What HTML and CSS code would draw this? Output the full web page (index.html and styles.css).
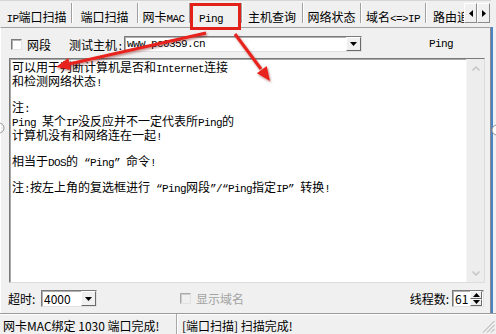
FILE: index.html
```html
<!DOCTYPE html>
<html>
<head>
<meta charset="utf-8">
<title>Ping</title>
<link rel="stylesheet" href="styles.css">
</head>
<body>
<div class="app">
  <div class="tabs">
    <div class="tab t1"><span class="m">IP</span>端口扫描</div>
    <div class="tab t2">端口扫描</div>
    <div class="tab t3">网卡<span class="m">MAC</span></div>
    <div class="tab t4"><span class="m">Ping</span></div>
    <div class="tab t5">主机查询</div>
    <div class="tab t6">网络状态</div>
    <div class="tab t7">域名<span class="m">&lt;=&gt;IP</span></div>
    <div class="tab t8">路由追踪</div>
    <div class="tab-scroll">
      <span class="sbtn"><svg width="4" height="7" viewBox="0 0 4 7"><polygon points="4,0 4,7 0,3.5" fill="#000"/></svg></span>
      <span class="sbtn"><svg width="4" height="7" viewBox="0 0 4 7"><polygon points="0,0 0,7 4,3.5" fill="#000"/></svg></span>
    </div>
  </div>

  <div class="panel">
    <div class="host-row">
      <span class="check"></span><span class="check-label">网段</span>
      <span class="host-label">测试主机<span class="m">:</span></span>
      <div class="combo host-combo">
        <span class="combo-value m">www.pc0359.cn</span>
        <span class="combo-btn"><svg width="7" height="4" viewBox="0 0 7 4"><polygon points="0,0 7,0 3.5,4" fill="#000"/></svg></span>
      </div>
      <span class="mode m">Ping</span>
    </div>

    <div class="memo">
      <div class="memo-text">
        <div>可以用于判断计算机是否和<span class="m">Internet</span>连接</div>
        <div>和检测网络状态<span class="m">!</span></div>
        <div class="blank"></div>
        <div>注<span class="m">:</span></div>
        <div><span class="m">Ping </span>某个<span class="m">IP</span>没反应并不一定代表所<span class="m">Ping</span>的</div>
        <div>计算机没有和网络连在一起<span class="m">!</span></div>
        <div class="blank"></div>
        <div>相当于<span class="m">DOS</span>的<span class="m"> “Ping” </span>命令<span class="m">!</span></div>
        <div class="blank"></div>
        <div>注<span class="m">:</span>按左上角的复选框进行<span class="m"> “Ping</span>网段<span class="m">”/“Ping</span>指定<span class="m">IP” </span>转换<span class="m">!</span></div>
      </div>
      <div class="vscroll">
        <svg width="8" height="5" viewBox="0 0 8 5"><polyline points="0.5,4.5 4,1 7.5,4.5" fill="none" stroke="#c2c2c2" stroke-width="1.4"/></svg>
        <svg width="8" height="5" viewBox="0 0 8 5"><polyline points="0.5,0.5 4,4 7.5,0.5" fill="none" stroke="#c2c2c2" stroke-width="1.4"/></svg>
      </div>
    </div>

    <div class="opt-row">
      <span class="opt-label">超时:</span>
      <div class="combo timeout-combo">
        <span class="combo-value">4000</span>
        <span class="combo-btn"><svg width="7" height="4" viewBox="0 0 7 4"><polygon points="0,0 7,0 3.5,4" fill="#000"/></svg></span>
      </div>
      <span class="check disabled"></span><span class="check-label disabled-text">显示域名</span>
      <span class="threads-label">线程数:</span>
      <div class="spin">
        <span class="spin-value">61</span>
        <span class="spin-btns">
          <span class="spin-btn"><svg width="7" height="4" viewBox="0 0 7 4"><polygon points="0,4 7,4 3.5,0" fill="#000"/></svg></span>
          <span class="spin-btn"><svg width="7" height="4" viewBox="0 0 7 4"><polygon points="0,0 7,0 3.5,4" fill="#000"/></svg></span>
        </span>
      </div>
    </div>
  </div>

  <div class="status">
    <div class="status-pane first">网卡MAC绑定 1030 端口完成!</div>
    <div class="status-pane second">[端口扫描] 扫描完成!</div>
    <svg class="grip" width="13" height="13" viewBox="0 0 13 13">
      <g stroke-width="1">
        <line x1="12.5" y1="1" x2="1" y2="12.5" stroke="#a8a8a8"/>
        <line x1="12.5" y1="5" x2="5" y2="12.5" stroke="#a8a8a8"/>
        <line x1="12.5" y1="9" x2="9" y2="12.5" stroke="#a8a8a8"/>
      </g>
    </svg>
  </div>

  <svg class="annot" width="496" height="334" viewBox="0 0 496 334">
    <defs>
      <filter id="sh" x="-20%" y="-20%" width="140%" height="140%">
        <feDropShadow dx="1" dy="1.5" stdDeviation="1" flood-color="#700000" flood-opacity="0.45"/>
      </filter>
    </defs>
    <circle cx="-1" cy="128" r="5" fill="none" stroke="#9a9a9a"/>
    <circle cx="497" cy="130" r="5" fill="#fff" stroke="#8a8a8a"/>
    <g filter="url(#sh)" fill="#e8231c" stroke="#e8231c">
      <line x1="206" y1="33" x2="69" y2="64" stroke-width="3"/>
      <polygon points="56,67 71,69.8 68.3,58.1" stroke="none"/>
      <line x1="235" y1="34" x2="261" y2="69" stroke-width="3"/>
      <polygon points="270,81 266.7,66.1 256.9,73.2" stroke="none"/>
    </g>
    <rect x="191.5" y="4.5" width="48" height="24" fill="none" stroke="#e3211b" stroke-width="3"/>
  </svg>
</div>
</body>
</html>
```

FILE: styles.css
```css
* { box-sizing: border-box; }
html, body { margin: 0; padding: 0; }
body {
  width: 496px;
  height: 334px;
  overflow: hidden;
  background: #f0f0f0;
  font-family: "Noto Sans CJK SC", sans-serif;
  font-size: 12px;
  color: #000;
}
.app {
  position: relative;
  width: 496px;
  height: 334px;
  display: flex;
  flex-direction: column;
}
.m {
  font-family: "Liberation Mono", "Noto Sans CJK SC", monospace;
  font-size: 11px;
  letter-spacing: -0.6px;
}

/* tabs */
.tabs {
  display: flex;
  height: 27px;
  width: 491px;
  padding-left: 2px;
  border-top: 1px solid #d6d6d6;
  flex: none;
}
.tab {
  flex: none;
  margin-top: 2px;
  height: 20px;
  padding-top: 8px;
  line-height: 12px;
  white-space: nowrap;
  text-align: center;
  border-right: 1px solid #a0a0a0;
  box-shadow: 1px 0 0 #fff;
}
.t1 { width: 70px; }
.t2 { width: 66px; }
.t3 { width: 52px; }
.t4 { width: 52px; text-align: left; padding-left: 9px; }
.t5 { width: 61px; }
.t6 { width: 58px; }
.t7 { width: 65px; }
.t8 { width: 38px; overflow: hidden; text-align: left; padding-left: 7px; border-right: none; box-shadow: none; }
.tab-scroll {
  display: flex;
  margin-top: 2px;
  height: 20px;
  flex: none;
}
.sbtn {
  width: 13px;
  height: 20px;
  display: flex;
  align-items: center;
  justify-content: center;
  background: #f0f0f0;
  border: 1px solid;
  border-color: #fff #8a8a8a #8a8a8a #fff;
}

/* panel */
.panel {
  width: 491px;
  height: 286px;
  border-top: 1px solid #a0a0a0;
  border-left: 1px solid #fff;
  border-right: 1px solid #8a8a8a;
  box-shadow: 2px 0 0 #4a84c4;
  flex: none;
}
.host-row {
  display: flex;
  align-items: center;
  height: 16px;
  margin-top: 8px;
  padding-left: 10px;
}
.check {
  width: 11px;
  height: 11px;
  flex: none;
  background: #fff;
  border: 1px solid;
  border-color: #7a7a7a #e4e4e4 #e4e4e4 #7a7a7a;
  box-shadow: inset 1px 1px 0 #b4b4b4;
}
.check.disabled {
  background: #f0f0f0;
  border-color: #a8a8a8 #e2e2e2 #e2e2e2 #a8a8a8;
  box-shadow: inset 1px 1px 0 #d0d0d0;
}
.check-label { margin-left: 5px; white-space: nowrap; }
.disabled-text { color: #a3a3a3; }
.host-label { margin-left: 18px; width: 54px; white-space: nowrap; }
.combo {
  display: flex;
  align-items: center;
  background: #fff;
  border: 1px solid;
  border-color: #7a7a7a #e0e0e0 #e0e0e0 #7a7a7a;
  box-shadow: inset 1px 1px 0 #b0b0b0;
  flex: none;
}
.host-combo { margin-left: 1px; width: 238px; height: 16px; }
.combo-value { padding-left: 2px; white-space: nowrap; line-height: 12px; }
.combo-btn {
  margin-left: auto;
  width: 15px;
  height: 100%;
  display: flex;
  align-items: center;
  justify-content: center;
  background: #f0f0f0;
  border: 1px solid;
  border-color: #fff #6a6a6a #6a6a6a #fff;
}
.mode { margin-left: 67px; }

/* memo */
.memo {
  display: flex;
  margin: 6px 0 0 8px;
  width: 476px;
  height: 225px;
  background: #fff;
  border: 1px solid;
  border-color: #7a7a7a #dcdcdc #dcdcdc #7a7a7a;
  box-shadow: inset 1px 1px 0 #a8a8a8;
}
.memo-text {
  flex: 1;
  padding: 2px 0 0 2px;
  line-height: 12px;
  white-space: nowrap;
}
.blank { height: 12px; }
.vscroll {
  width: 18px;
  flex: none;
  display: flex;
  flex-direction: column;
  justify-content: space-between;
  align-items: center;
  padding: 7px 0 6px;
  background: #ededed;
  border-left: 1px solid #f6f6f6;
}

/* options row */
.opt-row {
  display: flex;
  align-items: center;
  height: 17px;
  margin-top: 7px;
  padding: 0 6px 0 7px;
}
.opt-label { width: 33px; white-space: nowrap; }
.timeout-combo { width: 56px; height: 17px; }
.timeout-combo .combo-btn { width: 15px; }
.check.disabled { margin-left: 83px; }
.threads-label { margin-left: auto; white-space: nowrap; }
.spin {
  display: flex;
  align-items: center;
  margin-left: 3px;
  width: 32px;
  height: 17px;
  background: #fff;
  border: 1px solid;
  border-color: #7a7a7a #e0e0e0 #e0e0e0 #7a7a7a;
  box-shadow: inset 1px 1px 0 #b0b0b0;
}
.spin-value { padding-left: 2px; }
.spin-btns {
  margin-left: auto;
  margin-right: 1px;
  width: 12px;
  height: 15px;
  display: flex;
  flex-direction: column;
}
.spin-btn {
  flex: 1;
  display: flex;
  align-items: center;
  justify-content: center;
  background: #f0f0f0;
  border: 1px solid;
  border-color: #fff #6a6a6a #6a6a6a #fff;
}

/* status bar */
.status {
  display: flex;
  height: 21px;
  border-top: 1px solid #9a9a9a;
  box-shadow: inset 0 1px 0 #fff;
  flex: none;
}
.status-pane {
  padding-top: 2px;
  line-height: 19px;
  white-space: nowrap;
}
.status-pane.first {
  width: 177px;
  padding-left: 3px;
  border-right: 1px solid #a8a8a8;
  box-shadow: 1px 0 0 #fff;
}
.status-pane.second { padding-left: 5px; }
.grip { margin-left: auto; align-self: flex-end; margin-right: 1px; margin-bottom: 1px; }

/* annotations over the screenshot */
.annot {
  position: absolute;
  left: 0;
  top: 0;
  pointer-events: none;
  overflow: visible;
}
```
